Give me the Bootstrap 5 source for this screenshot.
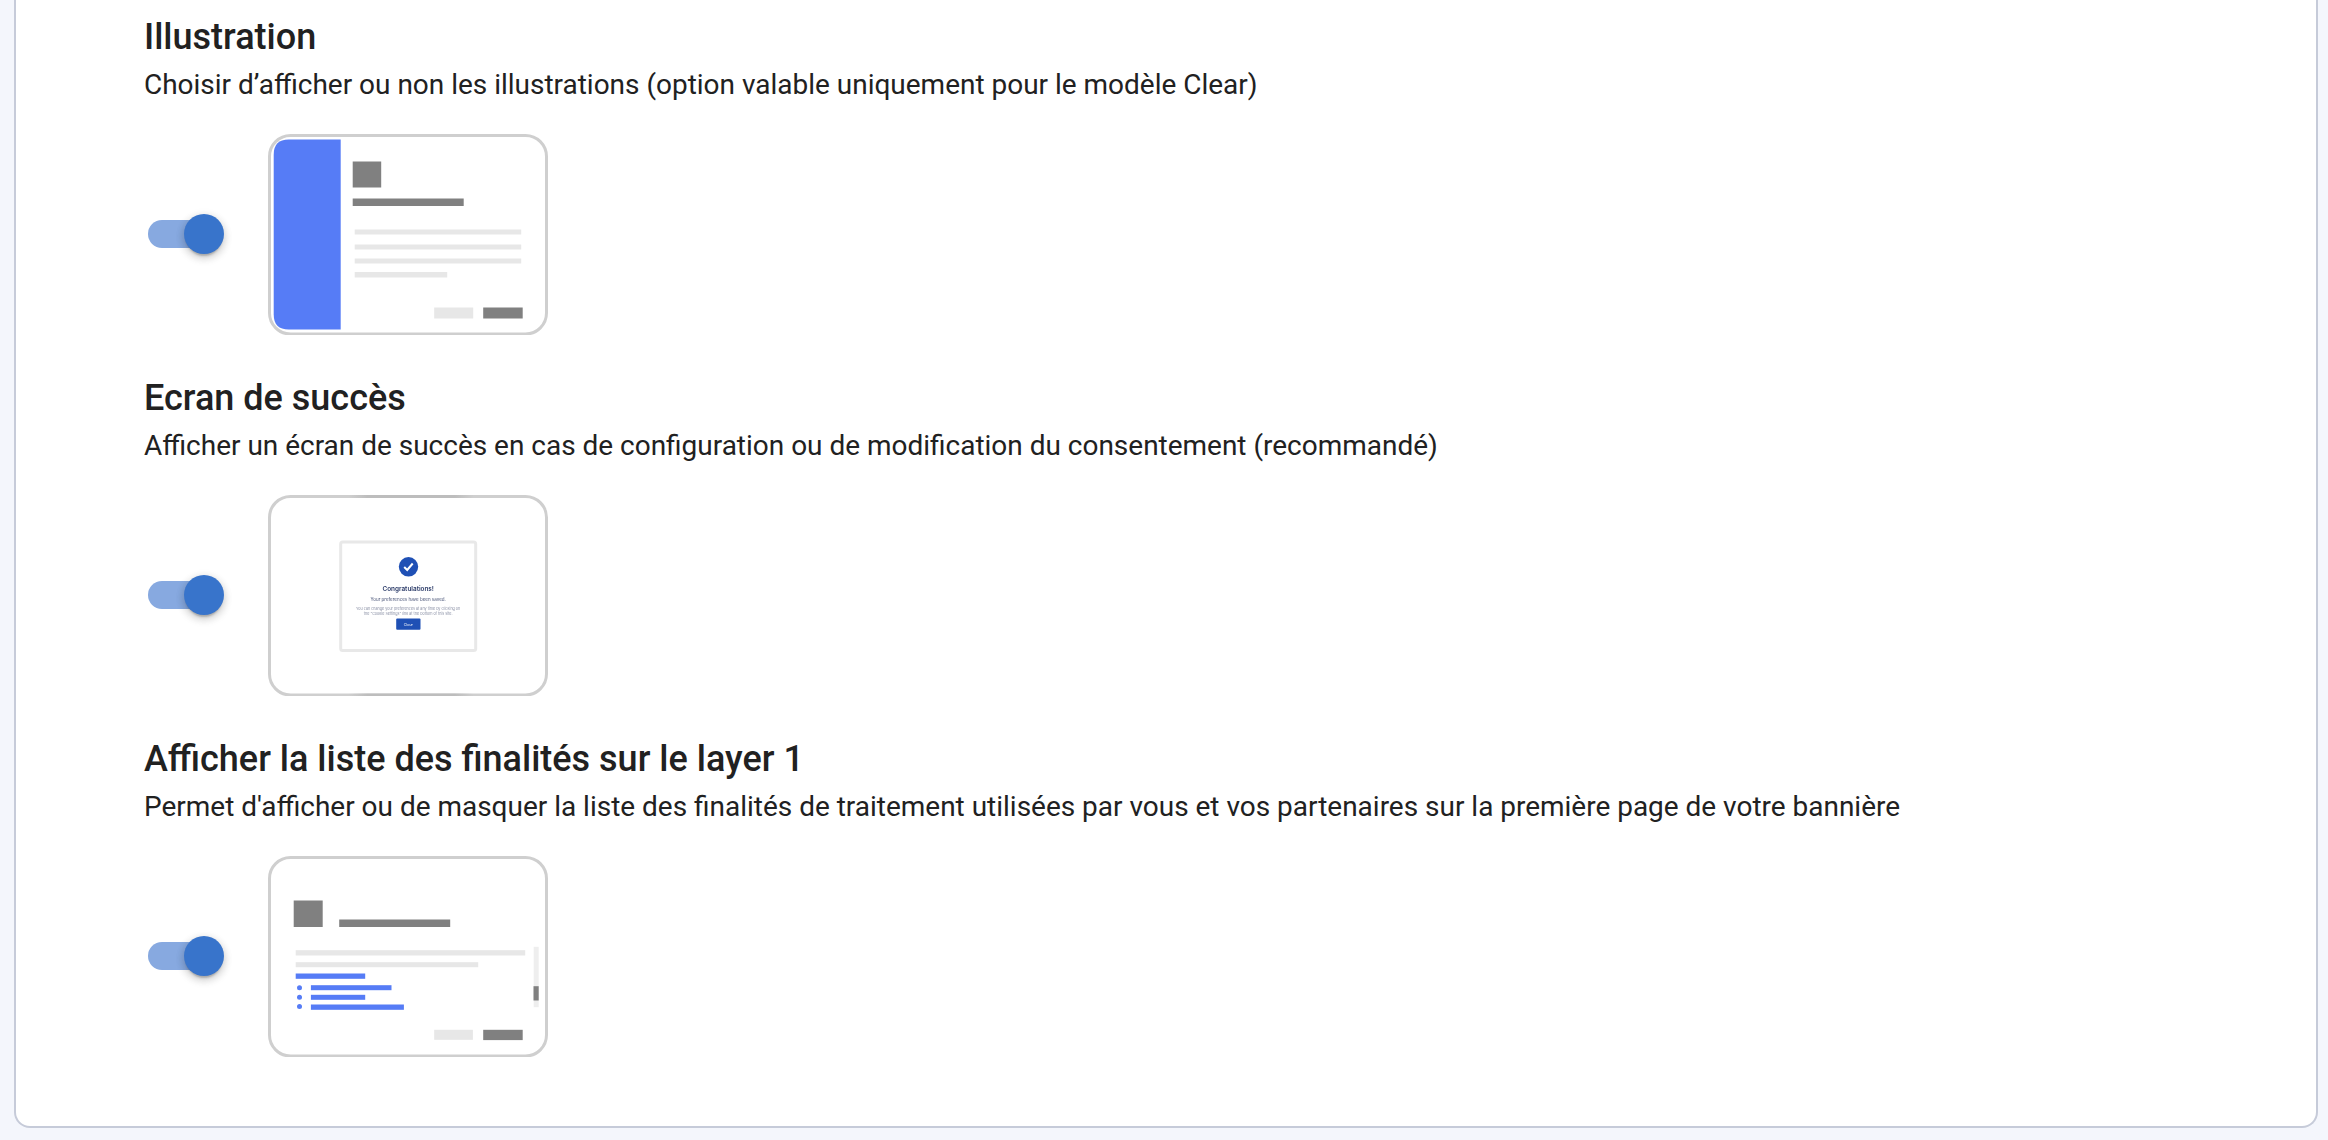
<!DOCTYPE html>
<html lang="fr">
<head>
    <meta charset="UTF-8">
    <meta name="viewport" content="width=device-width, initial-scale=1.0">
    <title>Options du bandeau</title>
    <link href="https://cdn.jsdelivr.net/npm/bootstrap@5.3.2/dist/css/bootstrap.min.css" rel="stylesheet">
    <style>
        body { background: #f4f6fc; font-family: Roboto, "Liberation Sans", sans-serif; color: #212121; height: 1140px; overflow: hidden; }
        .page-wrap { padding: 0 10px 12px 14px; }
        .main-card { height: 1128px; border: 2px solid #c6cbd9; border-top: 0; border-radius: 0 0 16px 16px; padding: 16px 0 0 128px; background: #fff; }
        .opt-block { height: 361.2px; }
        .opt-title { font-size: 36px; line-height: 42px; font-weight: 500; margin: 0 0 6px; }
        .opt-desc { font-size: 27.97px; line-height: 42px; margin: 0 0 28px; }
        .toggle { width: 76px; height: 40px; margin: 0 43.5px 2px 4px; flex: none; position: relative; }
        .toggle-track { position: absolute; left: 0; top: 6px; width: 68px; height: 28px; border-radius: 14px; background: #87a9e0; }
        .toggle-thumb { position: absolute; left: 36px; top: 0; width: 40px; height: 40px; border-radius: 50%; background: #3874cb;
            box-shadow: 0 4px 2px -2px rgba(0,0,0,.2), 0 4px 10px 0 rgba(0,0,0,.14), 0 2px 10px 0 rgba(0,0,0,.12); }
        .thumb-pic { width: 280px; height: 201px; display: block; filter: blur(.4px); }
        .pic-frame { fill: #fff; stroke: #cfcfcf; stroke-width: 3; }
        .dark { fill: #808080; }
        .light { fill: #e7e7e7; }
        .blue { fill: #567cf6; }
        .ok-text { font-family: Inter, Roboto, sans-serif; text-anchor: middle; }
    </style>
</head>
<body>
    <div class="page-wrap">
        <div class="main-card">
            <!-- Illustration -->
            <section class="opt-block">
                <h2 class="opt-title">Illustration</h2>
                <p class="opt-desc">Choisir d’afficher ou non les illustrations (option valable uniquement pour le modèle Clear)</p>
                <div class="d-flex align-items-center">
                    <div class="toggle"><span class="toggle-track"></span><span class="toggle-thumb"></span></div>
                    <svg class="thumb-pic" viewBox="-0.7 -0.5 280 201">
                        <rect class="pic-frame" x="0.8" y="1" width="277" height="198.5" rx="21"/>
                        <path class="blue" d="M72 5H20Q5 5 5 20V180Q5 195 20 195H72Z"/>
                        <rect class="dark" x="84" y="27" width="28.5" height="26"/>
                        <rect class="dark" x="84" y="64" width="111" height="7.5"/>
                        <rect class="light" x="86" y="95" width="166.5" height="5"/>
                        <rect class="light" x="86" y="110" width="166.5" height="5"/>
                        <rect class="light" x="86" y="124" width="166.5" height="5"/>
                        <rect class="light" x="86" y="137.5" width="92.5" height="5.5"/>
                        <rect class="light" x="165.5" y="173" width="39" height="11"/>
                        <rect class="dark" x="214.5" y="173" width="39.5" height="11"/>
                    </svg>
                </div>
            </section>

            <!-- Ecran de succes -->
            <section class="opt-block">
                <h2 class="opt-title">Ecran de succès</h2>
                <p class="opt-desc">Afficher un écran de succès en cas de configuration ou de modification du consentement (recommandé)</p>
                <div class="d-flex align-items-center">
                    <div class="toggle"><span class="toggle-track"></span><span class="toggle-thumb"></span></div>
                    <svg class="thumb-pic" viewBox="-0.7 -0.5 280 201">
                        <defs>
                            <linearGradient id="edgeFade">
                                <stop offset="0" stop-color="#bdbdbd" stop-opacity="0"/>
                                <stop offset=".15" stop-color="#bdbdbd"/>
                                <stop offset=".85" stop-color="#bdbdbd"/>
                                <stop offset="1" stop-color="#bdbdbd" stop-opacity="0"/>
                            </linearGradient>
                        </defs>
                        <rect class="pic-frame" x="0.8" y="1" width="277" height="198.5" rx="21"/>
                        <rect x="80" y="-0.5" width="125" height="3" fill="url(#edgeFade)"/>
                        <rect x="80" y="198" width="125" height="3" fill="url(#edgeFade)"/>
                        <rect x="72" y="46.5" width="135" height="108.5" rx="2" fill="#fff" stroke="#e8e8e8" stroke-width="3"/>
                        <circle cx="139.8" cy="71.3" r="9.7" fill="#1f50b5"/>
                        <path d="M135.5 71.5l3 3 5.500-6.500" fill="none" stroke="#fff" stroke-width="2"/>
                        <text class="ok-text" x="139.5" y="95" font-size="6.4" font-weight="600" fill="#2a3a68">Congratulations!</text>
                        <text class="ok-text" x="139.5" y="105.5" font-size="4.5" fill="#4a5578">Your preferences have been saved.</text>
                        <text class="ok-text" x="139.5" y="114.5" font-size="3.7" fill="#8a90a5">You can change your preferences at any time by clicking on</text>
                        <text class="ok-text" x="139.5" y="119.3" font-size="3.7" fill="#8a90a5">the "Cookie Settings" link at the bottom of this site.</text>
                        <rect x="127.5" y="123" width="24.3" height="11.3" rx="1" fill="#1f50b5"/>
                        <text class="ok-text" x="139.6" y="130" font-size="3.4" fill="#fff">Close</text>
                    </svg>
                </div>
            </section>

            <!-- Liste des finalites -->
            <section class="opt-block">
                <h2 class="opt-title">Afficher la liste des finalités sur le layer 1</h2>
                <p class="opt-desc">Permet d'afficher ou de masquer la liste des finalités de traitement utilisées par vous et vos partenaires sur la première page de votre bannière</p>
                <div class="d-flex align-items-center">
                    <div class="toggle"><span class="toggle-track"></span><span class="toggle-thumb"></span></div>
                    <svg class="thumb-pic" viewBox="-0.7 -0.5 280 201">
                        <rect class="pic-frame" x="0.8" y="1" width="277" height="198.5" rx="21"/>
                        <rect class="dark" x="25" y="44" width="29" height="26.5"/>
                        <rect class="dark" x="70.5" y="63" width="111" height="7.5"/>
                        <rect class="light" x="27" y="93.7" width="229.5" height="5.3"/>
                        <rect class="light" x="27" y="105.7" width="182.5" height="5"/>
                        <rect class="blue" x="27" y="117" width="69.5" height="5.3"/>
                        <circle class="blue" cx="30.8" cy="131.3" r="2.5"/>
                        <circle class="blue" cx="30.8" cy="140.7" r="2.5"/>
                        <circle class="blue" cx="30.8" cy="150" r="2.5"/>
                        <rect class="blue" x="42.2" y="128.7" width="80.6" height="5"/>
                        <rect class="blue" x="42.2" y="138.3" width="54.3" height="5"/>
                        <rect class="blue" x="42.2" y="148" width="93" height="5.3"/>
                        <rect x="265" y="90.3" width="5" height="60.4" fill="#eee"/>
                        <rect class="dark" x="264.8" y="129.7" width="5.2" height="14.3"/>
                        <rect class="light" x="165.5" y="173.3" width="38.7" height="10"/>
                        <rect class="dark" x="214.5" y="173.3" width="39.5" height="10.3"/>
                    </svg>
                </div>
            </section>
        </div>
    </div>
    <script src="https://cdn.jsdelivr.net/npm/bootstrap@5.3.2/dist/js/bootstrap.bundle.min.js"></script>
</body>
</html>
